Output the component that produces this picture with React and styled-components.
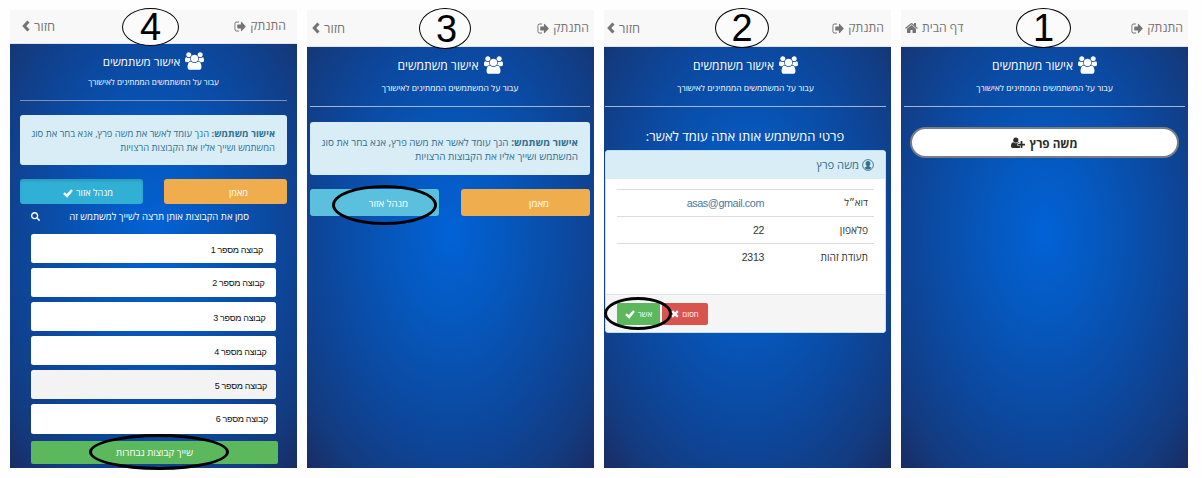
import React from 'react';
import styled, { createGlobalStyle } from 'styled-components';
import { FaSearch } from 'react-icons/fa';

const GlobalStyle = createGlobalStyle`
  body { margin: 0; background: #fefefe; }
  *, *::before, *::after { box-sizing: border-box; }
`;

const Board = styled.main`
  position: relative;
  display: flex;
  gap: 10px;
  width: 1202px;
  height: 478px;
  padding: 10px 0 10px 10px;
  overflow: hidden;
  font-family: 'Open Sans', 'Liberation Sans', Arial, sans-serif;
`;

const Phone = styled.section`
  flex: none;
  display: flex;
  flex-direction: column;
  width: 287px;
  height: 458px;
  direction: rtl;
  color: #fff;
  background: radial-gradient(ellipse 71% 71% at 50% 49%, #0262d6 0%, #0559c0 25%, #0c489e 60%, #133b80 85%, #192d64 100%);
`;

const NavBar = styled.header`
  flex: none;
  display: flex;
  justify-content: space-between;
  align-items: center;
  height: ${p => p.$h}px;
  padding: 0 ${p => p.$right}px ${p => p.$lift || 0}px ${p => p.$left}px;
  background: #f8f8f8;
  border-bottom: 1px solid #dfe3ea;
  color: #747474;
`;

const NavItem = styled.div`
  display: flex;
  align-items: center;
  gap: 4px;
`;

const Text = styled.span`
  display: block;
  white-space: nowrap;
  font-size: ${p => p.$size}px;
  letter-spacing: ${p => p.$track || 0}px;
  line-height: ${p => p.$lh || 16}px;
  font-weight: ${p => p.$weight || 400};
`;

const ArialText = styled(Text)`
  font-family: 'Liberation Sans', Arial, sans-serif;
`;

const Glyph = styled.svg`
  display: block;
  flex: none;
  fill: currentColor;
`;

const Hero = styled.div`
  flex: none;
  display: flex;
  flex-direction: column;
  align-items: center;
  height: ${p => p.$h}px;
  padding-top: ${p => p.$top}px;
  margin: 0 ${p => p.$mr}px 0 ${p => p.$ml}px;
  border-bottom: 1px solid ${p => p.$line || '#9fb6dd'};
`;

const HeroTitle = styled.div`
  display: flex;
  align-items: center;
  gap: 5px;
  height: 19px;
`;

const TitleText = styled(Text)`
  padding-top: 2px;
`;

const HeroSub = styled.div`
  margin-top: ${p => p.$gap}px;
`;

const Alert = styled.div`
  flex: none;
  height: ${p => p.$h}px;
  margin: ${p => p.$top}px ${p => p.$mr}px 0 ${p => p.$ml}px;
  padding: ${p => p.$pad}px 12px 0 0;
  border-radius: 3px;
  background: #d9edf7;
  color: #31708f;
`;

const ButtonRow = styled.div`
  flex: none;
  display: flex;
  justify-content: space-between;
  height: ${p => p.$h}px;
  margin: ${p => p.$top}px ${p => p.$mr}px 0 ${p => p.$ml}px;
`;

const TypeButton = styled.div`
  display: flex;
  align-items: center;
  gap: 3px;
  width: ${p => p.$w}px;
  padding: 3px ${p => p.$pad}px 0 0;
  border-radius: 3px;
  background: ${p => p.$bg};
  box-shadow: ${p => (p.$pressed ? 'inset 0 2px 3px rgba(0,0,0,.13)' : 'none')};
`;

const SearchRow = styled.div`
  flex: none;
  display: flex;
  justify-content: space-between;
  align-items: center;
  height: 30px;
  padding: 0 48px 5px 21px;
`;

const GroupList = styled.div`
  flex: none;
  display: flex;
  flex-direction: column;
  gap: 5px;
  margin: 0 21px;
`;

const GroupItem = styled.div`
  display: flex;
  align-items: center;
  height: 29.1px;
  padding: ${p => p.$drop || 2}px ${p => p.$pad}px 0 0;
  border-radius: 2.5px;
  background: ${p => (p.$active ? '#f3f3f3' : '#fff')};
  color: #111;
`;

const AssignButton = styled.div`
  flex: none;
  display: flex;
  justify-content: center;
  align-items: center;
  height: 23px;
  margin: 7px 19px 0 21px;
  padding-top: 2px;
  border-radius: 2px;
  background: #5cb85c;
`;

const DetailsHeading = styled.h2`
  display: flex;
  justify-content: center;
  align-items: flex-start;
  flex: none;
  height: 43px;
  margin: 0;
  padding: 21px 5px 0 0;
`;

const Card = styled.article`
  flex: none;
  display: flex;
  flex-direction: column;
  width: 281px;
  height: 183px;
  margin-right: 5px;
  border: 1px solid #bce1f0;
  border-radius: 3px;
  background: #fff;
  overflow: hidden;
`;

const CardHeader = styled.div`
  display: flex;
  align-items: center;
  gap: 3px;
  height: 28px;
  padding-right: 11px;
  background: #d9edf7;
  color: #31708f;
`;

const CardTable = styled.div`
  flex: 1;
  padding: 10px 11px 0;
`;

const CardRow = styled.div`
  display: grid;
  grid-template-columns: 104px 1fr;
  align-items: center;
  height: 27px;
  padding-right: 6px;
  border-top: 1px solid #dcdcdc;
  color: #333;
`;

const Email = styled(ArialText)`
  color: #47799f;
`;

const CardFooter = styled.div`
  display: flex;
  justify-content: flex-end;
  gap: 2px;
  height: 38px;
  padding: 8px 11px 0;
  border-top: 1px solid #dde6ea;
  background: #f5f5f5;
`;

const SmallButton = styled.div`
  display: flex;
  align-items: center;
  justify-content: center;
  gap: 3px;
  width: ${p => p.$w}px;
  height: 22px;
  border-radius: 2px;
  background: ${p => p.$bg};
  color: #fff;
`;

const PersonPill = styled.div`
  flex: none;
  display: flex;
  justify-content: center;
  align-items: center;
  gap: 4px;
  height: 31px;
  margin: 20px 9px 0 9px;
  border: 2px solid #777c85;
  border-radius: 16px;
  background: #fff;
  color: #2c2c2c;
`;

const Marker = styled.div`
  position: absolute;
  display: flex;
  align-items: center;
  justify-content: center;
  left: ${p => p.$x}px;
  top: ${p => p.$y}px;
  width: ${p => p.$w}px;
  height: ${p => p.$h}px;
  padding-left: ${p => p.$shift || 0}px;
  border: ${p => p.$stroke || 1}px solid #000;
  border-radius: 50%;
  background: ${p => (p.$stroke ? 'transparent' : '#fbfbfb')};
  color: #000;
  font: 38px/38px 'Liberation Sans', Arial, sans-serif;
`;

const UsersIcon = () => (
  <Glyph width="19" height="18" viewBox="0 0 1920 1792">
    <path d="M593 896q-162 5-265 128h-134q-82 0-138-40.5t-56-118.5q0-353 124-353 6 0 43.5 21t97.5 42.5 119 21.5q67 0 133-23-5 37-5 66 0 139 81 256zm1071 637q0 120-73 189.5t-194 69.5h-874q-121 0-194-69.5t-73-189.5q0-53 3.5-103.5t14-109 26.5-108.5 43-97.5 62-81 85.5-53.5 111.5-20q10 0 43 21.5t73 48 107 48 135 21.5 135-21.5 107-48 73-48 43-21.5q61 0 111.5 20t85.5 53.5 62 81 43 97.5 26.5 108.5 14 109 3.5 103.5zm-1024-1277q0 106-75 181t-181 75-181-75-75-181 75-181 181-75 181 75 75 181zm704 384q0 159-112.5 271.5t-271.5 112.5-271.5-112.5-112.5-271.5 112.5-271.5 271.5-112.5 271.5 112.5 112.5 271.5zm576 225q0 78-56 118.5t-138 40.5h-134q-103-123-265-128 81-117 81-256 0-29-5-66 66 23 133 23 59 0 119-21.5t97.5-42.5 43.5-21q124 0 124 353zm-128-609q0 106-75 181t-181 75-181-75-75-181 75-181 181-75 181 75 75 181z" />
  </Glyph>
);

const SignOutIcon = () => (
  <Glyph width="12" height="11" viewBox="0 192 1664 1408" preserveAspectRatio="none">
    <path d="M704 1440q0 4 1 20t.5 26.5-3 23.5-10 19.5-20.5 6.5h-320q-119 0-203.5-84.5t-84.5-203.5v-704q0-119 84.5-203.5t203.5-84.5h320q13 0 22.5 9.5t9.5 22.5q0 4 1 20t.5 26.5-3 23.5-10 19.5-20.5 6.5h-320q-66 0-113 47t-47 113v704q0 66 47 113t113 47h312l11.5 1 11.5 3 8 5.5 7 9 2 13.5zm928-544q0 26-19 45l-544 544q-19 19-45 19t-45-19-19-45v-288h-448q-26 0-45-19t-19-45v-384q0-26 19-45t45-19h448v-288q0-26 19-45t45-19 45 19l544 544q19 19 19 45z" />
  </Glyph>
);

const HomeIcon = () => (
  <Glyph width="13" height="12" viewBox="60 200 1670 1400">
    <path d="M1472 992v480q0 26-19 45t-45 19h-384v-384h-256v384h-384q-26 0-45-19t-19-45v-480q0-1 .5-3t.5-3l575-474 575 474q1 2 1 6zm223-69l-62 74q-8 9-21 11h-3q-13 0-21-7l-692-577-692 577q-12 8-24 7-13-2-21-11l-62-74q-8-10-7-23.5t11-21.5l719-599q32-26 76-26t76 26l244 204v-195q0-14 9-23t23-9h192q14 0 23 9t9 23v408l219 182q10 8 11 21.5t-7 23.5z" />
  </Glyph>
);

const UserPlusIcon = () => (
  <Glyph width="14" height="12" viewBox="0 64 2048 1728">
    <path d="M704 896q-159 0-271.5-112.5t-112.5-271.5 112.5-271.5 271.5-112.5 271.5 112.5 112.5 271.5-112.5 271.5-271.5 112.5zm960 128h352q13 0 22.5 9.5t9.5 22.5v192q0 13-9.5 22.5t-22.5 9.5h-352v352q0 13-9.5 22.5t-22.5 9.5h-192q-13 0-22.5-9.5t-9.5-22.5v-352h-352q-13 0-22.5-9.5t-9.5-22.5v-192q0-13 9.5-22.5t22.5-9.5h352v-352q0-13 9.5-22.5t22.5-9.5h192q13 0 22.5 9.5t9.5 22.5v352zm-736 224q0 52 38 90t90 38h256v238q-68 50-171 50h-874q-121 0-194-69t-73-190q0-53 3.5-103.5t14-109 26.5-108.5 43-97.5 62-81 85.5-53.5 111.5-20q19 0 39 17 79 61 154.5 91.5t164.5 30.5 164.5-30.5 154.5-91.5q20-17 39-17 132 0 217 96h-223q-52 0-90 38t-38 90v192z" />
  </Glyph>
);

const ChevronIcon = () => (
  <Glyph width="8" height="12" viewBox="0 0 8 12">
    <path d="M5.3.4 7.600 2.400 4.300 6l3.300 3.600-2.300 2L.2 6z" />
  </Glyph>
);

const CheckIcon = () => (
  <Glyph width="10" height="9" viewBox="0 0 9 8">
    <path d="M7.300.2 8.900 1.500 3.800 7.800.1 4.500 1.600 2.800 3.500 4.500z" />
  </Glyph>
);

const CrossIcon = () => (
  <Glyph width="8" height="8" viewBox="0 0 8 8">
    <path d="M1.900.3 4 2.300 6.100.3 7.700 1.900 5.700 4l2 2.100-1.600 1.600L4 5.700 1.900 7.700.3 6.100 2.300 4l-2-2.100z" />
  </Glyph>
);

const UserCircleIcon = () => (
  <Glyph width="12" height="12" viewBox="0 0 24 24">
    <circle cx="12" cy="12" r="10.8" fill="none" stroke="currentColor" strokeWidth="1.8" />
    <path d="M12 4.2c3 0 4.800 2.100 4.800 5 0 2-.9 3.800-2.200 4.800v1.200l4.600 2.200a9 9 0 0 1-14.400 0l4.600-2.200V14c-1.300-1-2.200-2.800-2.200-4.800 0-2.900 1.800-5 4.800-5z" />
  </Glyph>
);

const Nav = ({ home, ...bar }) => (
  <NavBar {...bar}>
    <NavItem>
      <Text $size={12.2}>התנתק</Text>
      <SignOutIcon />
    </NavItem>
    <NavItem>
      <Text $size={home ? 12.2 : 12.8}>{home ? 'דף הבית' : 'חזור'}</Text>
      {home ? <HomeIcon /> : <ChevronIcon />}
    </NavItem>
  </NavBar>
);

// In the right-to-left flow the group icon comes first, then the title.
const PageHero = ({ size = 12.1, subSize = 8.5, gap = 6, ...box }) => (
  <Hero {...box}>
    <HeroTitle>
      <UsersIcon />
      <TitleText $size={size}>אישור משתמשים</TitleText>
    </HeroTitle>
    <HeroSub $gap={gap}>
      <Text $size={subSize} $lh={12}>עבור על המשתמשים הממתינים לאישורך</Text>
    </HeroSub>
  </Hero>
);

const ApproveAlert = ({ size, lh, ...box }) => (
  <Alert {...box}>
    <Text $size={size} $lh={lh}>
      <b>אישור משתמש:</b> הנך עומד לאשר את משה פרץ, אנא בחר את סוג
    </Text>
    <Text $size={size} $lh={lh}>המשתמש ושייך אליו את הקבוצות הרצויות</Text>
  </Alert>
);

const groups = [
  { n: 1, pad: 13 },
  { n: 2, pad: 11.5, drop: 0.5 },
  { n: 3, pad: 10.5 },
  { n: 4, pad: 9.5 },
  { n: 5, pad: 9, active: true },
  { n: 6, pad: 8, drop: 0.5 },
];

export default function App() {
  return (
    <>
      <GlobalStyle />
      <Board>
        <Phone>
          <Nav $h={34} $right={11} $left={12} $lift={1} />
          <PageHero $h={57} $top={7} $ml={10} $mr={10} $line="#7d8fbc" size={11.6} subSize={8.15} gap={6} />
          <ApproveAlert $h={50} $top={14} $ml={10} $mr={10} $pad={12} size={9.42} lh={13.5} />
          <ButtonRow $h={25} $top={14} $ml={10} $mr={10}>
            <TypeButton $w={123} $pad={39} $bg="#f0ad4e"><Text $size={9.2}>מאמן</Text></TypeButton>
            <TypeButton $w={123} $pad={30} $bg="#31b0d5" $pressed>
              <Text $size={9.2}>מנהל אזור</Text>
              <CheckIcon />
            </TypeButton>
          </ButtonRow>
          <SearchRow>
            <Text $size={9.55}>סמן את הקבוצות אותן תרצה לשייך למשתמש זה</Text>
            <FaSearch size={9} />
          </SearchRow>
          <GroupList>
            {groups.map(g => (
              <GroupItem key={g.n} $pad={g.pad} $drop={g.drop} $active={g.active}>
                <ArialText $size={9} $track={-0.3}>קבוצה מספר {g.n}</ArialText>
              </GroupItem>
            ))}
          </GroupList>
          <AssignButton><Text $size={9.65}>שייך קבוצות נבחרות</Text></AssignButton>
        </Phone>

        <Phone>
          <Nav $h={37} $right={5} $left={5} />
          <PageHero $h={60} $top={8} $ml={3} $mr={4} gap={8} />
          <ApproveAlert $h={53} $top={15} $ml={3} $mr={4} $pad={13} size={9.92} lh={14} />
          <ButtonRow $h={27} $top={14} $ml={3} $mr={4}>
            <TypeButton $w={129} $pad={41} $bg="#f0ad4e"><Text $size={9.6}>מאמן</Text></TypeButton>
            <TypeButton $w={129} $pad={31} $bg="#5bc0de"><Text $size={9.8}>מנהל אזור</Text></TypeButton>
          </ButtonRow>
        </Phone>

        <Phone>
          <Nav $h={37} $right={7} $left={3} />
          <PageHero $h={60} $top={8} $ml={1} $mr={5} gap={8} />
          <DetailsHeading><Text $size={13}>פרטי המשתמש אותו אתה עומד לאשר:</Text></DetailsHeading>
          <Card>
            <CardHeader>
              <UserCircleIcon />
              <Text $size={11.2}>משה פרץ</Text>
            </CardHeader>
            <CardTable>
              <CardRow><Text $size={9.8}>דוא״ל</Text><Email $size={10.8} $track={-0.4}>asas@gmail.com</Email></CardRow>
              <CardRow><Text $size={10.2}>פלאפון</Text><ArialText $size={10.5} $track={-0.3}>22</ArialText></CardRow>
              <CardRow><Text $size={10.2}>תעודת זהות</Text><ArialText $size={10.5} $track={-0.3}>2313</ArialText></CardRow>
            </CardTable>
            <CardFooter>
              <SmallButton $w={46} $bg="#d9534f"><Text $size={7.8}>חסום</Text><CrossIcon /></SmallButton>
              <SmallButton $w={43} $bg="#5cb85c"><Text $size={8}>אשר</Text><CheckIcon /></SmallButton>
            </CardFooter>
          </Card>
        </Phone>

        <Phone>
          <Nav home $h={37} $right={5} $left={4} />
          <PageHero $h={60} $top={8} $ml={3} $mr={3} gap={8} />
          <PersonPill>
            <Text $size={11.7} $weight={700}>משה פרץ</Text>
            <UserPlusIcon />
          </PersonPill>
        </Phone>

        <Marker $x={122} $y={8} $w={57} $h={38}>4</Marker>
        <Marker $x={419} $y={8} $w={52} $h={41} $shift={3}>3</Marker>
        <Marker $x={715} $y={8} $w={54} $h={40}>2</Marker>
        <Marker $x={1016} $y={8} $w={55} $h={40}>1</Marker>
        <Marker $x={89} $y={434} $w={140} $h={36} $stroke={3} />
        <Marker $x={332} $y={185} $w={105} $h={40} $stroke={3} />
        <Marker $x={604} $y={297} $w={68} $h={33} $stroke={3} />
      </Board>
    </>
  );
}
